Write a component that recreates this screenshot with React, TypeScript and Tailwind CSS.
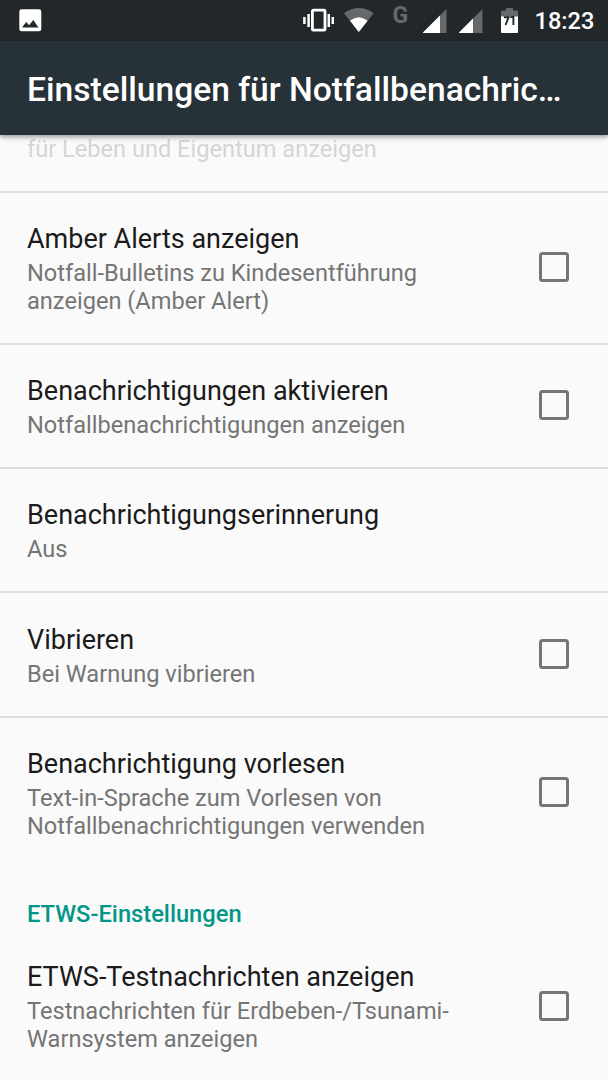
const rows = [
  {
    title: "Amber Alerts anzeigen",
    summary: ["Notfall-Bulletins zu Kindesentführung", "anzeigen (Amber Alert)"],
    checkbox: true,
  },
  {
    title: "Benachrichtigungen aktivieren",
    summary: ["Notfallbenachrichtigungen anzeigen"],
    checkbox: true,
  },
  {
    title: "Benachrichtigungserinnerung",
    summary: ["Aus"],
    checkbox: false,
  },
  {
    title: "Vibrieren",
    summary: ["Bei Warnung vibrieren"],
    checkbox: true,
  },
  {
    title: "Benachrichtigung vorlesen",
    summary: ["Text-in-Sprache zum Vorlesen von", "Notfallbenachrichtigungen verwenden"],
    checkbox: true,
  },
];

const etwsRow = {
  title: "ETWS-Testnachrichten anzeigen",
  summary: ["Testnachrichten für Erdbeben-/Tsunami-", "Warnsystem anzeigen"],
  checkbox: true,
};

const SignalIcon = ({ level }: { level: number }) => (
  <svg width="24" height="24" viewBox="0 0 24 24">
    <path d="M-0.5 24L23.5 0V24Z" fill="#66696b" />
    <path d={`M-0.5 24L${level} ${23.5 - level}V24Z`} fill="#fff" />
  </svg>
);

const StatusBar = () => (
  <div className="flex h-[41px] shrink-0 items-start bg-[#22272a] text-white">
    <svg className="ml-[19px] mt-[9px]" width="23" height="23" viewBox="0 0 23 23">
      <rect x="0.3" y="0.3" width="22" height="22" rx="2.4" fill="#fff" />
      <path d="M3 18.5L7.3 13L10 16.2L14.3 11L19.5 18.5Z" fill="#22272a" />
    </svg>
    <svg className="ml-[261px] mt-[8px]" width="31" height="24" viewBox="0 0 31 24">
      <rect x="9.4" y="2.2" width="12.6" height="20" rx="1" fill="none" stroke="#fff" strokeWidth="2.8" />
      <path d="M5.6 6V19M25.8 6V19M1.4 9V16M29.8 9V16" stroke="#fff" strokeWidth="2.5" />
    </svg>
    <svg className="ml-[10px] mt-[8px]" width="30" height="24" viewBox="0 0 30 24">
      <path d="M0 5.2Q15 -5 29.6 5.2L14.8 24Z" fill="#66696b" />
      <path d="M6 12.8Q14.8 5.5 23.6 12.8L14.8 24Z" fill="#fff" />
    </svg>
    <span className="ml-[18.5px] w-4 pt-[6px] text-[23px] leading-5 font-bold text-[#66696b]">G</span>
    <div className="mt-[9px] ml-[14.5px] flex gap-3">
      <SignalIcon level={17} />
      <SignalIcon level={14} />
    </div>
    <svg className="ml-[18px] mt-[8px]" width="17" height="25" viewBox="0 0 17 25">
      <path d="M1 2.5H5V0H12V2.5H16Q17 2.5 17 3.5V9H0V3.5Q0 2.5 1 2.5Z" fill="#66696b" />
      <path d="M0 8.5H17V24Q17 25 16 25H1Q0 25 0 24Z" fill="#fff" />
      <path d="M3 9.2H7.6L4.6 17M9.2 9.4L12.4 8.6V17" fill="none" stroke="#22272a" strokeWidth="1.9" />
    </svg>
    <span className="ml-[16.5px] mt-[7px] text-[23.6px] leading-[28px] font-medium">18:23</span>
  </div>
);

const Summary = ({ lines }: { lines: string[] }) => (
  <div className="text-[23.6px] leading-[27.7px] text-[#757575]">
    {lines.map((line) => (
      <p key={line} className="whitespace-nowrap">{line}</p>
    ))}
  </div>
);

const Preference = ({ title, summary, checkbox }: typeof etwsRow) => (
  <div className="flex items-center justify-between pr-[39px] pl-[27px]">
    <div>
      <h2 className="mb-[5px] text-[27px] leading-[32px] text-[#1b1b1b] whitespace-nowrap">{title}</h2>
      <Summary lines={summary} />
    </div>
    {checkbox && <div className="mb-[4px] size-[30px] shrink-0 rounded-[3.5px] border-[3px] border-[#757575]" />}
  </div>
);

const App = () => (
  <div className="flex h-[1080px] w-[608px] flex-col overflow-hidden bg-[#fafafa] font-['Roboto',sans-serif]">
    <StatusBar />
    <header className="relative z-10 flex h-[94px] shrink-0 items-center bg-[#263238] pl-[27px] shadow-[0_2px_5px_rgba(0,0,0,0.4)]">
      <h1 className="pt-[3px] text-[33.6px] leading-9 font-medium whitespace-nowrap text-white">Einstellungen für Notfallbenachric…</h1>
    </header>
    <main>
      <p className="h-[55.6px] pl-[27px] text-[23.6px] leading-[28px] text-[#d4d5d5]">für Leben und Eigentum anzeigen</p>
      {rows.map((row) => (
        <div key={row.title} className="border-t-2 border-[#dedede] pt-[30.4px] pb-[27.3px]">
          <Preference {...row} />
        </div>
      ))}
      <h3 className="mt-[32px] mb-[33.5px] pl-[27px] text-[23.7px] leading-[28px] font-medium text-[#009688]">
        ETWS-Einstellungen
      </h3>
      <Preference {...etwsRow} />
    </main>
  </div>
);

export default App;
